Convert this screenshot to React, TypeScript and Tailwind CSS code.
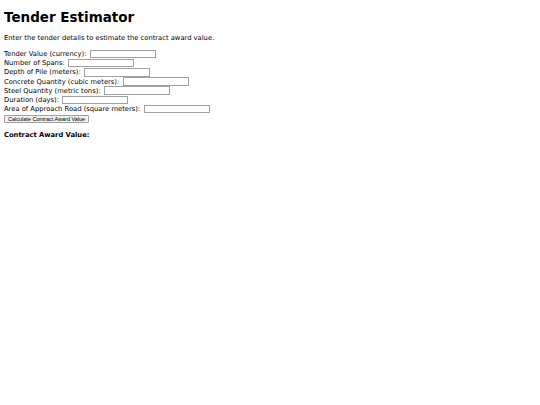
const fields = [
  'Tender Value (currency):',
  'Number of Spans:',
  'Depth of Pile (meters):',
  'Concrete Quantity (cubic meters):',
  'Steel Quantity (metric tons):',
  'Duration (days):',
  'Area of Approach Road (square meters):',
];

export default function App() {
  return (
    <div className="min-h-screen bg-white px-[4px] pt-[1px] text-black" style={{ fontFamily: '"DejaVu Sans", sans-serif' }}>
      <h1 className="mt-[8px] mb-[9px] text-[13.5px] font-bold leading-[16px]">Tender Estimator</h1>
      <p className="mb-[7.4px] text-[6.75px] leading-[8px]">Enter the tender details to estimate the contract award value.</p>
      <form className="text-[6.75px] leading-[8px]" onSubmit={(e) => e.preventDefault()}>
        {fields.map((label) => (
          <div key={label} className="flex items-center gap-[3.5px] h-[9.2px]">
            <label>{label}</label>
            <input type="text" className="h-[8.5px] w-[66px] border border-[#a0a0a0] bg-white" />
          </div>
        ))}
        <button
          type="submit"
          className="mt-[1.2px] h-[8px] rounded-[1px] border border-[#a0a0a0] bg-[#efefef] px-[3px] text-[5.5px] leading-[6px]"
          style={{ fontFamily: '"Liberation Sans", Arial, sans-serif' }}
        >
          Calculate Contract Award Value
        </button>
      </form>
      <h3 className="mt-[8px] text-[6.75px] font-bold leading-[8px]">Contract Award Value:</h3>
    </div>
  );
}
